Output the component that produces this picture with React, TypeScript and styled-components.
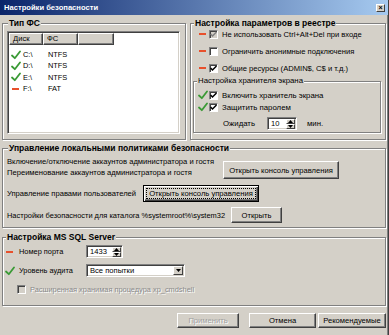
import React from "react";
import styled, { createGlobalStyle, css } from "styled-components";

const GlobalStyle = createGlobalStyle`
  html, body { margin: 0; padding: 0; background: #d4d0c8; }
  body { font-family: "Liberation Sans", Arial, sans-serif; font-size: 7.6px; color: #000; }
  * { box-sizing: border-box; }
`;

const Window = styled.div`
  width: 389px;
  height: 335px;
  background: #d4d0c8;
  display: flex;
  flex-direction: column;
  overflow: hidden;
  border-right: 1px solid #404040;
  box-shadow: inset -1px 0 0 #808080;
`;

const TitleBar = styled.div`
  height: 15px;
  flex: none;
  display: flex;
  align-items: center;
  justify-content: space-between;
  padding: 0 3px 0 4px;
  background: linear-gradient(to right, #0a246a, #a6caf0);
`;

const Title = styled.span`
  color: #fff;
  font-weight: bold;
  font-size: 7.6px;
  line-height: 15px;
`;

const CloseBtn = styled.div`
  width: 9px;
  height: 8px;
  background: #d4d0c8;
  border: 1px solid;
  border-color: #fff #404040 #404040 #fff;
  display: flex;
  align-items: center;
  justify-content: center;
  font-size: 7px;
  line-height: 6px;
  font-weight: bold;
`;

const Content = styled.div`
  flex: 1;
  display: flex;
  flex-direction: column;
  padding: 3px 2px 0 2px;
`;

const TopRow = styled.div`
  display: grid;
  grid-template-columns: 184px 1fr;
  column-gap: 4px;
  height: 122px;
`;

const Group = styled.fieldset<{ $pad: string; $mt?: number }>`
  margin: ${(p) => p.$mt ?? 0}px 0 0 0;
  padding: ${(p) => p.$pad};
  min-width: 0;
  border: 1px solid #808080;
  box-shadow: inset 1px 1px 0 #fff, 1px 1px 0 #fff;
  display: flex;
  flex-direction: column;
`;

const Legend = styled.legend<{ $small?: boolean }>`
  padding: 0 1px;
  margin-left: 1px;
  font-weight: ${(p) => (p.$small ? "normal" : "bold")};
  font-size: ${(p) => (p.$small ? "7.8px" : "8.5px")};
  line-height: 10px;
  background: #d4d0c8;
`;

const ListView = styled.div`
  height: 103px;
  background: #fff;
  border: 1px solid;
  border-color: #808080 #fff #fff #808080;
  box-shadow: inset 1px 1px 0 #404040, inset -1px -1px 0 #d4d0c8;
  padding: 1px;
  display: flex;
  flex-direction: column;
`;

const ListHeader = styled.div`
  display: grid;
  grid-template-columns: 34px 35px 36px;
  height: 12px;
  flex: none;
`;

const HeaderCell = styled.div`
  background: #d4d0c8;
  border: 1px solid;
  border-color: #fff #404040 #404040 #fff;
  box-shadow: inset -1px -1px 0 #808080;
  padding-left: 3px;
  line-height: 10px;
`;

const ListBody = styled.div`
  padding-top: 4px;
  display: flex;
  flex-direction: column;
`;

const ListRow = styled.div`
  display: grid;
  grid-template-columns: 12px 25px 1fr;
  height: 11.3px;
  align-items: center;
  padding-left: 2px;
  font-size: 7.4px;
`;

const Icon = styled.span`
  display: flex;
  align-items: center;
  width: 10px;
  height: 10px;
  flex: none;
`;

const Dash = styled.span`
  display: block;
  width: 7px;
  height: 2px;
  margin-left: 1px;
  background: #e8502c;
`;

const CheckRow = styled.div`
  display: flex;
  align-items: center;
  height: 12px;
`;

const Box = styled.span<{ $grey?: boolean }>`
  width: 9px;
  height: 9px;
  flex: none;
  margin: 0 4px 0 1px;
  background: ${(p) => (p.$grey ? "#d4d0c8" : "#fff")};
  border: 1px solid;
  border-color: #808080 #fff #fff #808080;
  box-shadow: inset 1px 1px 0 #404040;
  display: flex;
  align-items: center;
  justify-content: center;
`;

const Label = styled.span<{ $disabled?: boolean; $size?: number }>`
  white-space: nowrap;
  line-height: 11px;
  ${(p) =>
    p.$size &&
    css`
      font-size: ${p.$size}px;
    `}
  ${(p) =>
    p.$disabled &&
    css`
      color: #8a8a8a;
      text-shadow: 1px 1px 0 #fff;
    `}
`;

const RegRows = styled.div`
  display: flex;
  flex-direction: column;
  gap: 5px;
  padding-left: 5px;
`;

const InnerRows = styled.div`
  display: flex;
  flex-direction: column;
  padding: 3px 0 0 2px;
`;

const WaitRow = styled.div`
  display: flex;
  align-items: center;
  height: 13px;
  margin-top: 4px;
  padding-left: 25px;
`;

const Spin = styled.div<{ $w: number }>`
  width: ${(p) => p.$w}px;
  height: 13px;
  background: #fff;
  border: 1px solid;
  border-color: #808080 #fff #fff #808080;
  box-shadow: inset 1px 1px 0 #404040, inset -1px -1px 0 #d4d0c8;
  display: flex;
  align-items: center;
  justify-content: space-between;
  padding: 1px;
  padding-left: 3px;
`;

const SpinArrows = styled.div`
  width: 9px;
  height: 9px;
  display: flex;
  flex-direction: column;
`;

const Arrow = styled.div`
  flex: 1;
  background: #d4d0c8;
  border: 1px solid;
  border-color: #fff #404040 #404040 #fff;
  display: flex;
  align-items: center;
  justify-content: center;
`;

const Gap = styled.span<{ $w: number }>`
  display: inline-block;
  width: ${(p) => p.$w}px;
  flex: none;
`;

const PolicyRow = styled.div<{ $cols: string; $mt: number; $h: number }>`
  display: grid;
  grid-template-columns: ${(p) => p.$cols};
  margin-top: ${(p) => p.$mt}px;
  height: ${(p) => p.$h}px;
  align-items: center;
`;

const TextCol = styled.div`
  display: flex;
  flex-direction: column;
  align-self: start;
`;

const Button = styled.div<{ $w: number; $h: number; $focus?: boolean; $disabled?: boolean; $top?: number }>`
  width: ${(p) => p.$w}px;
  height: ${(p) => p.$h}px;
  margin-top: ${(p) => p.$top ?? 0}px;
  background: #d4d0c8;
  border: 1px solid;
  border-color: #fff #404040 #404040 #fff;
  box-shadow: inset -1px -1px 0 #808080;
  display: flex;
  align-items: center;
  justify-content: center;
  white-space: nowrap;
  ${(p) =>
    p.$focus &&
    css`
      border-color: #000;
      box-shadow: inset 1px 1px 0 #fff, inset -1px -1px 0 #404040, inset -2px -2px 0 #808080;
      outline: 1px dotted #000;
      outline-offset: -4px;
    `}
  ${(p) =>
    p.$disabled &&
    css`
      color: #a0a0a0;
      text-shadow: 1px 1px 0 #fff;
    `}
`;

const SqlRow = styled.div<{ $mt: number }>`
  display: grid;
  grid-template-columns: 12px 65px auto;
  column-gap: 2px;
  align-items: center;
  height: 13px;
  margin-top: ${(p) => p.$mt}px;
`;

const Select = styled.div`
  width: 99px;
  height: 13px;
  background: #fff;
  border: 1px solid;
  border-color: #808080 #fff #fff #808080;
  box-shadow: inset 1px 1px 0 #404040, inset -1px -1px 0 #d4d0c8;
  display: flex;
  align-items: center;
  justify-content: space-between;
  padding: 1px 1px 1px 3px;
`;

const DropBtn = styled.div`
  width: 10px;
  height: 9px;
  background: #d4d0c8;
  border: 1px solid;
  border-color: #fff #404040 #404040 #fff;
  display: flex;
  align-items: center;
  justify-content: center;
`;

const DisabledRow = styled.div`
  display: flex;
  align-items: center;
  height: 12px;
  margin-top: 6px;
  padding-left: 11px;
`;

const ButtonBar = styled.div`
  display: flex;
  justify-content: flex-end;
  margin-top: 7px;
  gap: 2px;
`;

const Check = () => (
  <Icon>
    <svg width="10" height="10" viewBox="0 0 10 10">
      <path d="M1 5.5 L3.8 8.2 L9 1.5" fill="none" stroke="#3a9a35" strokeWidth="1.8" strokeLinecap="round" strokeLinejoin="round" />
    </svg>
  </Icon>
);

const Minus = () => (
  <Icon>
    <Dash />
  </Icon>
);

const Tick = ({ color = "#000" }: { color?: string }) => (
  <svg width="7" height="7" viewBox="0 0 7 7">
    <path d="M0.5 3 L2.5 5 L6.5 1" fill="none" stroke={color} strokeWidth="1.5" />
  </svg>
);

const Tri = ({ up }: { up?: boolean }) => (
  <svg width="5" height="3" viewBox="0 0 5 3">
    <path d={up ? "M0 3 L2.5 0 L5 3Z" : "M0 0 L2.5 3 L5 0Z"} fill="#000" />
  </svg>
);

const drives = [
  { ok: true, d: "C:\\", fs: "NTFS" },
  { ok: true, d: "D:\\", fs: "NTFS" },
  { ok: true, d: "E:\\", fs: "NTFS" },
  { ok: false, d: "F:\\", fs: "FAT" },
];

export default function App() {
  return (
    <>
      <GlobalStyle />
      <Window>
        <TitleBar>
          <Title>Настройки безопасности</Title>
          <CloseBtn>×</CloseBtn>
        </TitleBar>
        <Content>
          <TopRow>
            <Group $pad="3px 5px 5px 4px">
              <Legend>Тип ФС</Legend>
              <ListView>
                <ListHeader>
                  <HeaderCell>Диск</HeaderCell>
                  <HeaderCell>ФС</HeaderCell>
                  <HeaderCell />
                </ListHeader>
                <ListBody>
                  {drives.map((r) => (
                    <ListRow key={r.d}>
                      {r.ok ? <Check /> : <Minus />}
                      <Label>{r.d}</Label>
                      <Label>{r.fs}</Label>
                    </ListRow>
                  ))}
                </ListBody>
              </ListView>
            </Group>
            <Group $pad="0 4px 5px 2px">
              <Legend>Настройка параметров в реестре</Legend>
              <RegRows>
                <CheckRow>
                  <Minus />
                  <Box $grey>
                    <Tick color="#808080" />
                  </Box>
                  <Label>Не использовать Ctrl+Alt+Del при входе</Label>
                </CheckRow>
                <CheckRow>
                  <Minus />
                  <Box />
                  <Label>Ограничить анонимные подключения</Label>
                </CheckRow>
                <CheckRow>
                  <Minus />
                  <Box>
                    <Tick />
                  </Box>
                  <Label>Общие ресурсы (ADMIN$, C$ и т.д.)</Label>
                </CheckRow>
              </RegRows>
              <Group $pad="0 4px 2px 2px" $mt={2}>
                <Legend $small>Настройка хранителя экрана</Legend>
                <InnerRows>
                  <CheckRow>
                    <Check />
                    <Box>
                      <Tick />
                    </Box>
                    <Label $size={7.8}>Включить хранитель экрана</Label>
                  </CheckRow>
                  <CheckRow>
                    <Check />
                    <Box>
                      <Tick />
                    </Box>
                    <Label $size={7.8}>Защитить паролем</Label>
                  </CheckRow>
                  <WaitRow>
                    <Label $size={7.8}>Ожидать</Label>
                    <Gap $w={12} />
                    <Spin $w={30}>
                      <span>10</span>
                      <SpinArrows>
                        <Arrow>
                          <Tri up />
                        </Arrow>
                        <Arrow>
                          <Tri />
                        </Arrow>
                      </SpinArrows>
                    </Spin>
                    <Gap $w={10} />
                    <Label $size={7.8}>мин.</Label>
                  </WaitRow>
                </InnerRows>
              </Group>
            </Group>
          </TopRow>

          <Group $pad="0 4px 4px 4px" $mt={3}>
            <Legend>Управление локальными политиками безопасности</Legend>
            <PolicyRow $cols="216px auto" $mt={3} $h={23}>
              <TextCol>
                <Label>Включение/отключение аккаунтов администратора и гостя</Label>
                <Label>Переименование аккаунтов администратора и гостя</Label>
              </TextCol>
              <Button $w={116} $h={18} $top={5}>
                Открыть консоль управления
              </Button>
            </PolicyRow>
            <PolicyRow $cols="136px auto" $mt={6} $h={17}>
              <Label>Управление правами пользователей</Label>
              <Button $w={116} $h={17} $focus>
                Открыть консоль управления
              </Button>
            </PolicyRow>
            <PolicyRow $cols="224px auto" $mt={5} $h={16}>
              <Label $size={7.45}>Настройки безопасности для каталога %systemroot%\system32</Label>
              <Button $w={51} $h={16}>
                Открыть
              </Button>
            </PolicyRow>
          </Group>

          <Group $pad="3px 4px 10px 2px" $mt={4}>
            <Legend>Настройка MS SQL Server</Legend>
            <SqlRow $mt={0}>
              <Minus />
              <Label $size={7.4}>Номер порта</Label>
              <Spin $w={37}>
                <span>1433</span>
                <SpinArrows>
                  <Arrow>
                    <Tri up />
                  </Arrow>
                  <Arrow>
                    <Tri />
                  </Arrow>
                </SpinArrows>
              </Spin>
            </SqlRow>
            <SqlRow $mt={6}>
              <Check />
              <Label $size={7.4}>Уровень аудита</Label>
              <Select>
                <span>Все попытки</span>
                <DropBtn>
                  <Tri />
                </DropBtn>
              </Select>
            </SqlRow>
            <DisabledRow>
              <Box $grey />
              <Label $disabled $size={7.4}>Расширенная хранимая процедура xp_cmdshell</Label>
            </DisabledRow>
          </Group>

          <ButtonBar>
            <Button $w={62} $h={15} $disabled>
              Применить
            </Button>
            <Gap $w={6} />
            <Button $w={67} $h={15}>
              Отмена
            </Button>
            <Button $w={68} $h={15}>
              Рекомендуемые
            </Button>
          </ButtonBar>
        </Content>
      </Window>
    </>
  );
}
